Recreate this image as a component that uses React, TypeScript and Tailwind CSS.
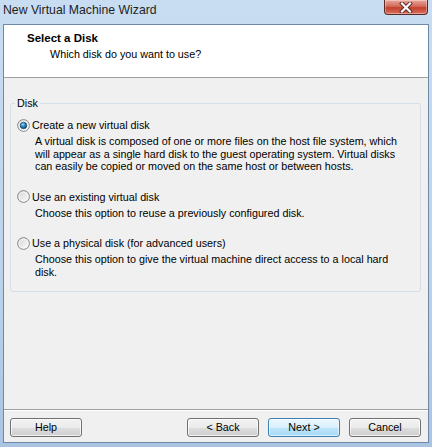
import React from 'react';

function Radio({ checked }: { checked?: boolean }) {
  return (
    <svg width="13" height="13" viewBox="0 0 13 13" className="shrink-0">
      <defs>
        <linearGradient id={checked ? 'rbg1' : 'rbg0'} x1="0" y1="0" x2="1" y2="1">
          <stop offset="0" stopColor="#d6d6d6" />
          <stop offset="1" stopColor="#fbfbfb" />
        </linearGradient>
        <radialGradient id="rdot" cx="0.4" cy="0.35" r="0.7">
          <stop offset="0" stopColor="#a6d8f5" />
          <stop offset="0.45" stopColor="#2a88c4" />
          <stop offset="1" stopColor="#0a3e66" />
        </radialGradient>
      </defs>
      <circle cx="6.5" cy="6.5" r="5.9" fill={`url(#${checked ? 'rbg1' : 'rbg0'})`} stroke="#8a8a8a" strokeWidth="1" />
      <circle cx="6.5" cy="6.5" r="4.3" fill="none" stroke="#ffffff" strokeOpacity="0.7" strokeWidth="0.8" />
      {checked && <circle cx="6.5" cy="6.5" r="3.3" fill="url(#rdot)" stroke="#133d5e" strokeWidth="0.6" />}
    </svg>
  );
}

function Option({ label, desc, checked }: { label: string; desc: string[]; checked?: boolean }) {
  return (
    <div>
      <div className="flex h-[16px] items-center gap-[2px]">
        <Radio checked={checked} />
        <span className="leading-[16px]">{label}</span>
      </div>
      <div className="mt-[2px] pl-[18px] leading-[12.5px]">
        {desc.map((l) => (
          <div key={l}>{l}</div>
        ))}
      </div>
    </div>
  );
}

function Button({ children, primary }: { children: React.ReactNode; primary?: boolean }) {
  return (
    <button
      className={
        primary
          ? 'h-[19px] w-[72px] rounded-[3px] border border-[#3c7fb1] bg-[linear-gradient(#eaf6fd_0%,#d9f0fc_50%,#bee6fd_51%,#a7d9f5_100%)] text-[10.75px] leading-[17px] text-black shadow-[inset_0_0_0_1px_rgba(255,255,255,0.6)]'
          : 'h-[19px] w-[72px] rounded-[3px] border border-[#707070] bg-[linear-gradient(#f2f2f2_0%,#ebebeb_50%,#dddddd_51%,#cfcfcf_100%)] text-[10.75px] leading-[17px] text-black shadow-[inset_0_0_0_1px_rgba(255,255,255,0.7)]'
      }
    >
      {children}
    </button>
  );
}

export default function App() {
  return (
    <div className="flex h-[447px] w-[432px] flex-col bg-[linear-gradient(#c9ddf2,#bcd3eb_60%,#a9c4e2)] font-['Liberation_Sans',Arial,sans-serif] text-black">
      <div className="flex h-[24px] shrink-0 items-start justify-between">
        <span className="pl-[3px] pt-[2px] text-[12.25px] leading-[16px] text-[#1e1e1e]">New Virtual Machine Wizard</span>
        <div className="mr-[4px] flex h-[15px] w-[44px] items-center justify-center rounded-b-[4px] border border-t-0 border-[#5a2a24] bg-[linear-gradient(#e9a69b,#d36a5a_45%,#c2402e_55%,#d8705c)] shadow-[inset_0_0_0_1px_rgba(255,255,255,0.35)]">
          <svg width="14" height="11" viewBox="0 0 14 11">
            <path d="M3 1.5 L11 9.5 M11 1.5 L3 9.5" stroke="#5b2520" strokeWidth="4" strokeLinecap="square" />
            <path d="M3 1.5 L11 9.5 M11 1.5 L3 9.5" stroke="#ffffff" strokeWidth="2.2" strokeLinecap="square" />
          </svg>
        </div>
      </div>

      <div className="mx-[3px] mb-[4px] flex flex-1 flex-col border border-[#6e88a8] bg-[#f0f0f0]">
        <div className="h-[53px] shrink-0 border-b border-[#a0a0a0] bg-white pl-[23px] pt-[6px]">
          <div className="text-[11.5px] font-bold leading-[15px]">Select a Disk</div>
          <div className="mt-[2px] pl-[23px] text-[10.75px] leading-[13px]">Which disk do you want to use?</div>
        </div>

        <div className="flex-1 border-b border-[#a0a0a0] pl-[6px] pr-[7px] pt-[19px] text-[10.75px]">
          <fieldset className="rounded-[3px] border border-[#d5dfe5] pb-[13px] pl-[6px] pt-[7px]">
            <legend className="-ml-[2px] px-[2px] leading-[13px]">Disk</legend>
            <div className="flex flex-col gap-[16px]">
              <Option
                checked
                label="Create a new virtual disk"
                desc={[
                  'A virtual disk is composed of one or more files on the host file system, which',
                  'will appear as a single hard disk to the guest operating system. Virtual disks',
                  'can easily be copied or moved on the same host or between hosts.',
                ]}
              />
              <Option label="Use an existing virtual disk" desc={['Choose this option to reuse a previously configured disk.']} />
              <Option
                label="Use a physical disk (for advanced users)"
                desc={['Choose this option to give the virtual machine direct access to a local hard', 'disk.']}
              />
            </div>
          </fieldset>
        </div>

        <div className="flex h-[32px] shrink-0 items-start gap-[9px] border-t border-white pl-[6px] pr-[7px] pt-[7px]">
          <Button>Help</Button>
          <div className="flex-1" />
          <Button>&lt; Back</Button>
          <Button primary>Next &gt;</Button>
          <Button>Cancel</Button>
        </div>
      </div>
    </div>
  );
}
